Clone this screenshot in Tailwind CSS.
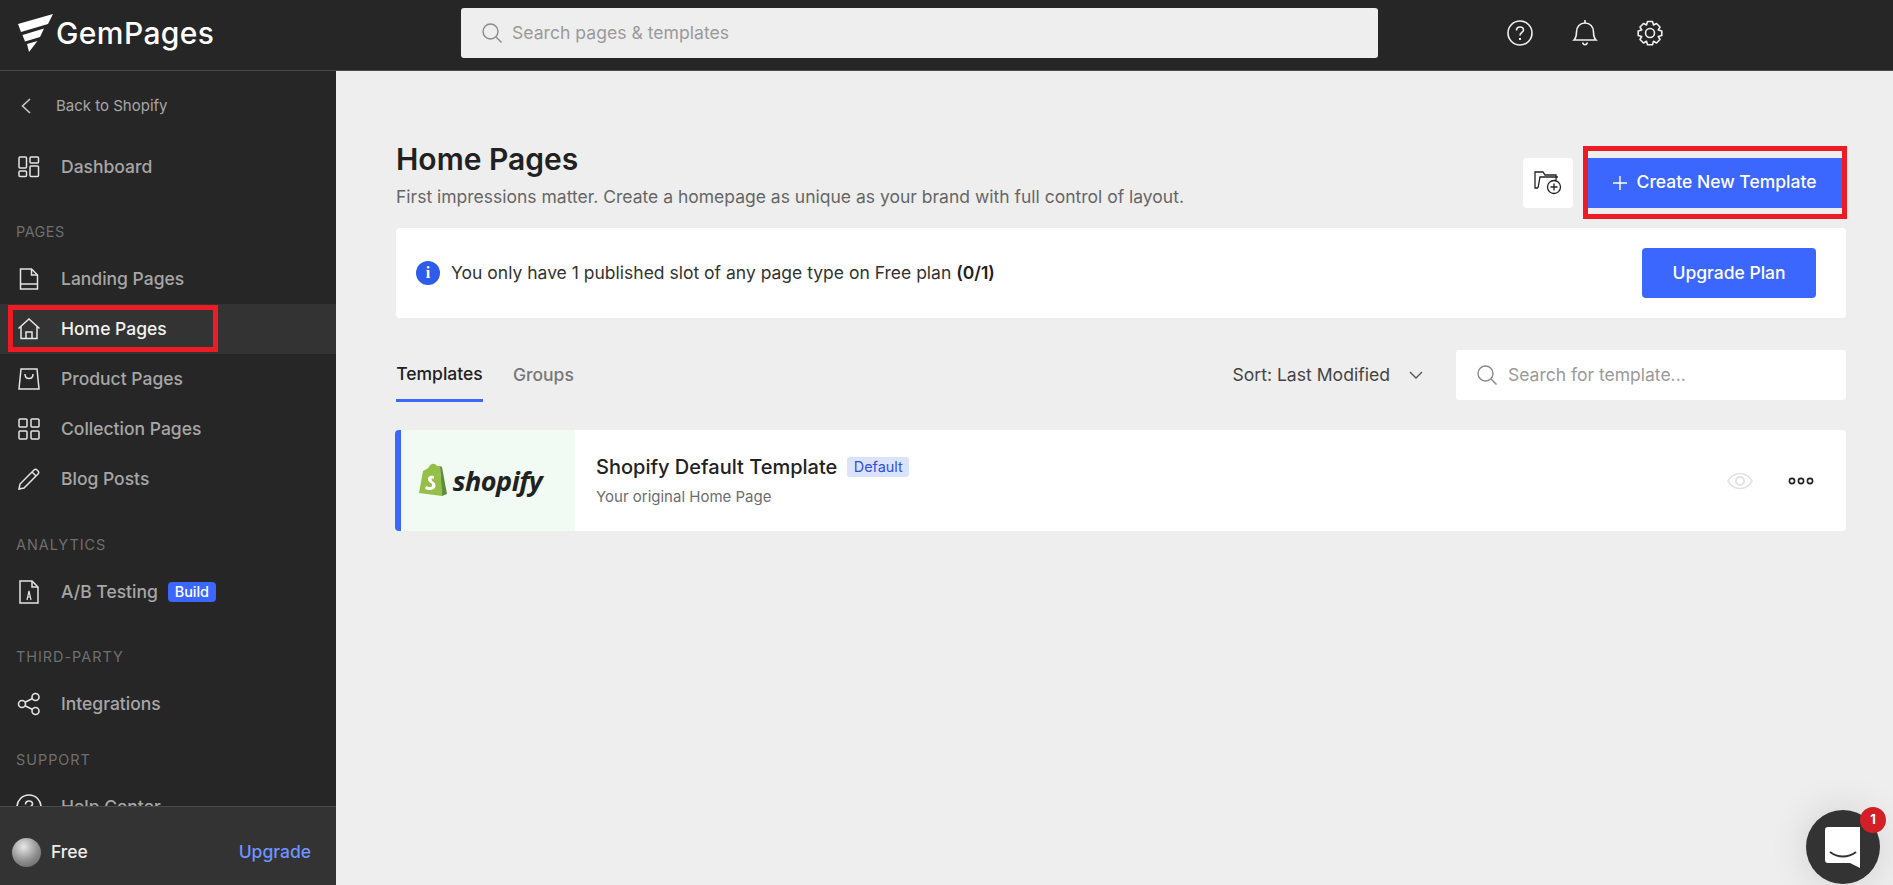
<!DOCTYPE html>
<html lang="en">

<head>
    <meta charset="UTF-8">
    <meta name="viewport" content="width=device-width, initial-scale=1.0">
    <title>GemPages - Home Pages</title>
    <script src="https://cdn.jsdelivr.net/npm/@tailwindcss/browser@4"></script>
</head>

<body class="h-[885px] overflow-hidden bg-[#eeeeee] font-['Inter',sans-serif] text-[#212121]">

    <!-- Top bar -->
    <header class="flex h-[71px] items-center border-b border-[#4a4a4a] bg-[#262626] pb-[4px]">
        <div class="flex w-[336px] shrink-0 items-center pl-[18px]">
            <svg width="36" height="38" viewBox="0 0 36 38" fill="#fff" class="mr-[2px]">
                <path d="M0 10 L35 0 L30 10 L3 18 Z" />
                <path d="M4.5 21 L26 14.5 L22 23 L7 27.5 Z" />
                <path d="M9 30 L19.5 27 L11 38 Z" />
            </svg>
            <span class="text-[30px] leading-none font-medium tracking-[0.4px] text-white">GemPages</span>
        </div>
        <div class="ml-[125px] flex h-[50px] w-[917px] items-center rounded-[3px] bg-[#eeeeee] pl-[20px]">
            <svg width="22" height="22" viewBox="0 0 22 22" fill="none" stroke="#8a8a8a" stroke-width="1.4">
                <circle cx="9.5" cy="9.5" r="7.5" />
                <path d="M15 15 L20.5 20.5" />
            </svg>
            <span class="ml-[9px] text-[17.6px] text-[#9a9a9a]">Search pages &amp; templates</span>
        </div>
        <div class="ml-[129px] flex items-center gap-[39px]">
            <svg width="26" height="26" viewBox="0 0 26 26" fill="none" stroke="#f0f0f0" stroke-width="1.6">
                <circle cx="13" cy="13" r="12" />
                <path d="M9.5 10.5 C9.5 8 11 7 13 7 C15 7 16.5 8.3 16.5 10 C16.5 12.5 13 12.5 13 15.5" />
                <path d="M13 18 V20" stroke-width="2" />
            </svg>
            <svg width="26" height="28" viewBox="0 0 26 28" fill="none" stroke="#f0f0f0" stroke-width="1.6">
                <path d="M2 21 H24 C22 19 21.5 17 21.5 13 C21.5 7.5 18 4 13 4 C8 4 4.5 7.5 4.5 13 C4.5 17 4 19 2 21 Z" />
                <path d="M13 1 V4" />
                <path d="M10.5 23.5 C11.5 26.5 14.5 26.5 15.5 23.5" />
            </svg>
            <svg width="26" height="26" viewBox="0 0 26 26" fill="none" stroke="#f0f0f0" stroke-width="1.6">
                <circle cx="13" cy="13" r="4.5" />
                <path d="M10.5 1.5 H15.5 L16.5 5 L19.5 3.5 L23 7 L21.3 10 L24.8 11 V15.5 L21.3 16.5 L23 19.5 L19.5 23 L16.5 21.3 L15.5 24.8 H10.5 L9.5 21.3 L6.5 23 L3 19.5 L4.7 16.5 L1.2 15.5 V11 L4.7 10 L3 7 L6.5 3.5 L9.5 5 Z" stroke-linejoin="round" />
            </svg>
        </div>
    </header>

    <div class="flex h-[814px]">
        <!-- Sidebar -->
        <aside class="relative flex w-[336px] shrink-0 flex-col bg-[#262626]">
            <nav class="h-[735px] overflow-hidden text-[17.5px] font-medium text-[#a6a6a6]">
                <a class="mt-[10px] flex h-[50px] items-center pl-[20px] text-[15px] font-normal">
                    <svg width="12" height="18" viewBox="0 0 12 18" fill="none" stroke="#c8c8c8" stroke-width="1.6">
                        <path d="M10 2 L2.5 9 L10 16" />
                    </svg>
                    <span class="ml-[24px]">Back to Shopify</span>
                </a>
                <a class="mt-[11px] flex h-[50px] items-center pl-[18px]">
                    <svg width="22" height="22" viewBox="0 0 22 22" fill="none" stroke="#e4e4e4" stroke-width="1.5">
                        <rect x="1" y="1" width="7.5" height="11" rx="1" />
                        <rect x="12" y="1" width="8.5" height="6" rx="1" />
                        <rect x="1" y="15" width="7.5" height="5.5" rx="1" />
                        <rect x="12" y="10" width="8.5" height="10.5" rx="1" />
                    </svg>
                    <span class="ml-[21px]">Dashboard</span>
                </a>
                <p class="mt-[31px] pl-[16px] text-[14.4px] leading-[18px] font-normal tracking-[0.5px] text-[#6f6f6f]">PAGES</p>
                <a class="mt-[13px] flex h-[50px] items-center pl-[18px]">
                    <svg width="22" height="22" viewBox="0 0 22 22" fill="none" stroke="#e4e4e4" stroke-width="1.5">
                        <path d="M2.5 1 H13.5 L19.5 7 V21 H2.5 Z" />
                        <path d="M13.5 1 V7 H19.5" />
                        <path d="M2.5 16 H19.5" />
                    </svg>
                    <span class="ml-[21px]">Landing Pages</span>
                </a>
                <a class="flex h-[50px] items-center bg-[#333333] pl-[18px] text-[#f2f2f2]">
                    <svg width="22" height="22" viewBox="0 0 22 22" fill="none" stroke="#e8e8e8" stroke-width="1.5">
                        <path d="M0.5 10.5 L11 1 L21.5 10.5" />
                        <path d="M3 8.5 V20.5 H19 V8.5" />
                        <path d="M8 20.5 V14 H14 V20.5" />
                    </svg>
                    <span class="ml-[21px]">Home Pages</span>
                </a>
                <a class="flex h-[50px] items-center pl-[18px]">
                    <svg width="22" height="22" viewBox="0 0 22 22" fill="none" stroke="#e4e4e4" stroke-width="1.5">
                        <path d="M3 1 H19 L21 21 H1 Z" />
                        <path d="M7 6 C7 12 15 12 15 6" />
                    </svg>
                    <span class="ml-[21px]">Product Pages</span>
                </a>
                <a class="flex h-[50px] items-center pl-[18px]">
                    <svg width="22" height="22" viewBox="0 0 22 22" fill="none" stroke="#e4e4e4" stroke-width="1.5">
                        <rect x="1" y="1" width="8" height="8" rx="1" />
                        <rect x="13" y="1" width="8" height="8" rx="1" />
                        <rect x="1" y="13" width="8" height="8" rx="1" />
                        <rect x="13" y="13" width="8" height="8" rx="1" />
                    </svg>
                    <span class="ml-[21px]">Collection Pages</span>
                </a>
                <a class="flex h-[50px] items-center pl-[18px]">
                    <svg width="22" height="22" viewBox="0 0 22 22" fill="none" stroke="#e4e4e4" stroke-width="1.5">
                        <path d="M1 21 L2 16 L16 2 C17 1 18 1 19 2 L20 3 C21 4 21 5 20 6 L6 20 Z" />
                        <path d="M14 4 L18 8" />
                    </svg>
                    <span class="ml-[21px]">Blog Posts</span>
                </a>
                <p class="mt-[32px] pl-[16px] text-[14.4px] leading-[18px] font-normal tracking-[1px] text-[#6f6f6f]">ANALYTICS</p>
                <a class="mt-[13px] flex h-[50px] items-center pl-[18px]">
                    <svg width="22" height="24" viewBox="0 0 22 24" fill="none" stroke="#e4e4e4" stroke-width="1.5">
                        <path d="M2 1 H14 L20 7 V23 H2 Z" />
                        <path d="M14 1 V7 H20" />
                        <path d="M9 20 L11 11 L13 20 M9.7 17 H12.3" stroke-width="1.2" />
                    </svg>
                    <span class="ml-[21px]">A/B Testing</span>
                    <span class="ml-[10px] flex h-[20px] w-[48px] items-center justify-center rounded-[4px] bg-[#3c67ff] text-[14.4px] text-white">Build</span>
                </a>
                <p class="mt-[31px] pl-[16px] text-[14.4px] leading-[18px] font-normal tracking-[1px] text-[#6f6f6f]">THIRD-PARTY</p>
                <a class="mt-[13px] flex h-[50px] items-center pl-[17px]">
                    <svg width="24" height="24" viewBox="0 0 24 24" fill="none" stroke="#e4e4e4" stroke-width="1.6">
                        <circle cx="5" cy="12" r="3.5" />
                        <circle cx="18.5" cy="5" r="3.5" />
                        <circle cx="18.5" cy="19" r="3.5" />
                        <path d="M8 10.2 L15.5 6.5 M8 13.8 L15.5 17.5" />
                    </svg>
                    <span class="ml-[20px]">Integrations</span>
                </a>
                <p class="mt-[22px] pl-[16px] text-[14.4px] leading-[18px] font-normal tracking-[1px] text-[#6f6f6f]">SUPPORT</p>
                <a class="mt-[13px] flex h-[50px] items-center pl-[16px]">
                    <svg width="26" height="26" viewBox="0 0 26 26" fill="none" stroke="#e4e4e4" stroke-width="1.6">
                        <circle cx="13" cy="13" r="12" />
                        <path d="M9.5 10.5 C9.5 8 11 7 13 7 C15 7 16.5 8.3 16.5 10 C16.5 12.5 13 12.5 13 15.5" />
                    </svg>
                    <span class="ml-[19px]">Help Center</span>
                </a>
            </nav>
            <div class="flex h-[79px] items-center border-t border-[#4a4a4a] bg-[#333333] pt-[13px] pr-[25px] pl-[12px]">
                <div class="h-[29px] w-[29px] rounded-full bg-[radial-gradient(circle_at_40%_30%,#e8e8e8,#8d8d8d_55%,#5c5c5c)]"></div>
                <span class="ml-[10px] text-[17.5px] font-medium text-[#ececec]">Free</span>
                <span class="ml-auto text-[17.5px] font-medium text-[#6f93ff]">Upgrade</span>
            </div>
            <!-- red annotation -->
            <div class="absolute top-[234px] left-[8px] h-[47px] w-[210px] border-[5px] border-[#ed1c24]"></div>
        </aside>

        <!-- Main -->
        <main class="relative flex-1 pt-[70px] pr-[47px] pl-[60px]">
            <div class="flex h-[87px] items-start justify-between">
                <div>
                    <h1 class="text-[30px] leading-[36px] font-semibold text-[#212121]">Home Pages</h1>
                    <p class="mt-[9px] text-[17.5px] leading-[22px] text-[#666666]">First impressions matter. Create a homepage as unique as your brand with full control of layout.</p>
                </div>
                <div class="mt-[17px] flex items-center">
                    <div class="flex h-[50px] w-[50px] items-center justify-center rounded-[4px] bg-white">
                        <svg width="28" height="26" viewBox="0 0 28 26" fill="none" stroke="#212121" stroke-width="1.3">
                            <path d="M4 18 L1 18 V2 H9 L11 5 H22 V10 M4 18 L6 7 H24" />
                            <circle cx="20" cy="17" r="6.5" />
                            <path d="M20 13.5 V20.5 M16.5 17 H23.5" />
                        </svg>
                    </div>
                    <button class="ml-[15px] flex h-[50px] w-[258px] items-center justify-center bg-[#3c67ff] pr-[5px] pb-[1px] text-[17.5px] font-medium text-white">
                        <svg width="14" height="14" viewBox="0 0 14 14" fill="none" stroke="#fff" stroke-width="1.4" class="mr-[10px]">
                            <path d="M7 0 V14 M0 7 H14" />
                        </svg>
                        Create New Template
                    </button>
                </div>
            </div>

            <!-- Notice -->
            <div class="flex h-[90px] items-center rounded-[4px] bg-white pr-[30px] pl-[20px]">
                <div class="flex h-[24px] w-[24px] items-center justify-center rounded-full bg-[#2f5bea] font-['Liberation_Serif',serif] text-[16px] font-bold text-white">i</div>
                <p class="ml-[11px] text-[17.5px] text-[#333333]">You only have 1 published slot of any page type on Free plan <b class="font-semibold text-[#212121]">(0/1)</b></p>
                <button class="ml-auto h-[50px] w-[174px] rounded-[4px] bg-[#3c67ff] text-[17.5px] font-medium text-white">Upgrade Plan</button>
            </div>

            <!-- Tabs and filters -->
            <div class="mt-[32px] flex h-[50px] items-center">
                <div class="flex h-[50px] w-[87px] items-center justify-center text-[17.5px] font-medium text-[#212121]">
                    <span class="border-b-[3px] border-[#3c67ff] pt-[13px] pb-[11px]">Templates</span>
                </div>
                <span class="ml-[30px] text-[17.5px] font-medium text-[#777777]">Groups</span>
                <span class="ml-auto text-[17.6px] text-[#444444]">Sort: Last Modified</span>
                <svg width="14" height="8" viewBox="0 0 14 8" fill="none" stroke="#555" stroke-width="1.4" class="mr-[33px] ml-[19px]">
                    <path d="M1 1 L7 7 L13 1" />
                </svg>
                <div class="flex h-[50px] w-[390px] items-center rounded-[3px] bg-white pl-[20px]">
                    <svg width="22" height="22" viewBox="0 0 22 22" fill="none" stroke="#8a8a8a" stroke-width="1.4">
                        <circle cx="9.5" cy="9.5" r="7.5" />
                        <path d="M15 15 L20.5 20.5" />
                    </svg>
                    <span class="ml-[10px] text-[17.5px] text-[#9a9a9a]">Search for template...</span>
                </div>
            </div>

            <!-- Template row -->
            <div class="mt-[30px] ml-[-1px] flex h-[101px] items-center overflow-hidden rounded-[4px] border-l-[6px] border-[#3c67ff] bg-white">
                <div class="flex h-full w-[174px] items-center justify-center bg-[#f1fbf4] pr-[16px]">
                    <svg width="30" height="37" viewBox="0 0 30 35">
                        <path d="M1 30 L5 8 C9 6 10 5 11 4 C13 0 17 0 19 3 L22 3 L24 33 Z" fill="#95bf47" />
                        <path d="M22 3 L24 4 L29 31 L24 33 Z" fill="#5e8e3e" />
                        <path d="M16 13 C12 12 9 14 10 17 C11 20 15 20 14 23 C13 25 10 24 8 23 L7 26 C11 28 17 27 17.5 23 C18 19 13.5 18.5 13.5 16.5 C13.5 15.5 15 15 16 16 Z" fill="#fff" />
                    </svg>
                    <span class="ml-[5px] font-['Open_Sans',sans-serif] text-[27px] leading-none font-bold tracking-[-0.5px] text-[#212121] italic">shopify</span>
                </div>
                <div class="ml-[21px]">
                    <div class="flex items-center">
                        <span class="text-[20px] leading-[24px] font-medium text-[#212121]">Shopify Default Template</span>
                        <span class="ml-[10px] flex h-[20px] w-[62px] items-center justify-center rounded-[3px] bg-[#dbe3ff] text-[14.4px] text-[#2f4fe0]">Default</span>
                    </div>
                    <p class="mt-[9px] text-[15px] leading-[18px] text-[#6d6d6d]">Your original Home Page</p>
                </div>
                <svg width="26" height="18" viewBox="0 0 26 18" fill="none" stroke="#e2e2e2" stroke-width="1.6" class="ml-auto">
                    <path d="M1 9 C7 -1 19 -1 25 9 C19 19 7 19 1 9 Z" />
                    <circle cx="13" cy="9" r="4" stroke-width="2" />
                </svg>
                <svg width="26" height="8" viewBox="0 0 26 8" fill="none" stroke="#212121" stroke-width="1.6" class="mr-[32px] ml-[35px]">
                    <circle cx="4" cy="4" r="2.6" />
                    <circle cx="13" cy="4" r="2.6" />
                    <circle cx="22" cy="4" r="2.6" />
                </svg>
            </div>

            <!-- red annotation -->
            <div class="absolute top-[75px] left-[1247px] h-[73px] w-[264px] border-[5px] border-[#ed1c24]"></div>

            <!-- Chat widget -->
            <div class="absolute top-[739px] left-[1470px] flex h-[74px] w-[74px] items-center justify-center rounded-full bg-[#333333] shadow-[0_0_40px_rgba(0,0,0,0.12)]">
                <svg width="36" height="41" viewBox="0 0 36 41">
                    <path d="M3 0 H35 V41 L25 36 H3 C1 36 0 35 0 33 V3 C0 1 1 0 3 0 Z" fill="#fff" />
                    <path d="M5 25 C13 31 23 31 31 25" fill="none" stroke="#333" stroke-width="2" />
                </svg>
                <span class="absolute top-[-3px] left-[54px] flex h-[26px] w-[26px] items-center justify-center rounded-full bg-[#d32027] text-[13px] font-bold text-white">1</span>
            </div>
        </main>
    </div>

</body>

</html>
